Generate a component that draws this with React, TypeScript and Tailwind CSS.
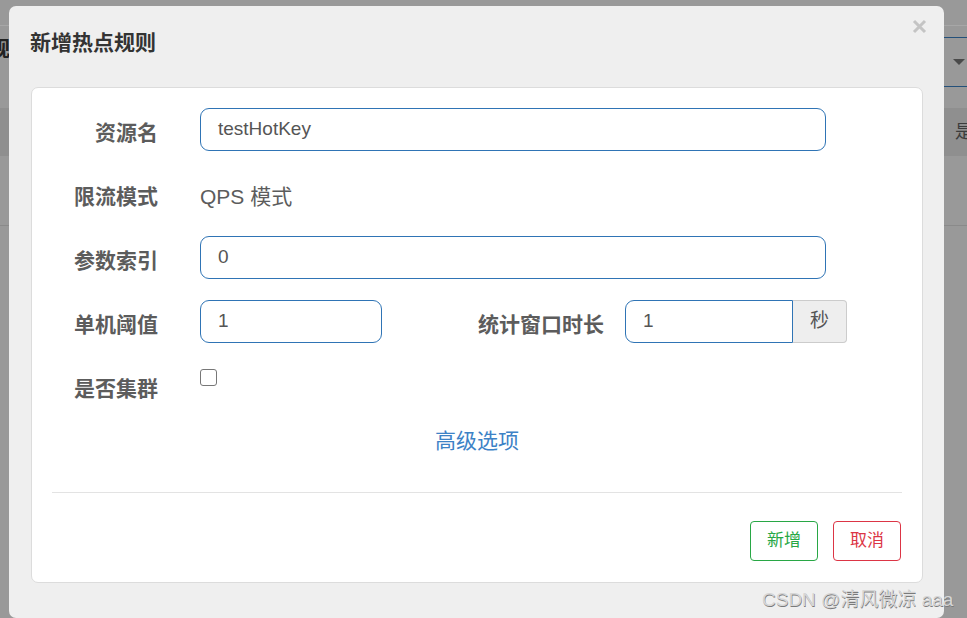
import React from "react";

function FieldLabel({ children, className = "" }: { children: React.ReactNode; className?: string }) {
  return (
    <div className={`shrink-0 pt-[12px] text-right text-[21px] font-bold leading-[26px] text-[#5c5c5c] ${className}`}>
      {children}
    </div>
  );
}

function TextInput({ value, className = "" }: { value: string; className?: string }) {
  return (
    <div
      className={`flex h-[43px] items-center rounded-[9px] border border-[#2f74b5] bg-white pl-[17px] text-[19px] text-[#555] ${className}`}
    >
      {value}
    </div>
  );
}

export default function App() {
  return (
    <div className="relative h-[618px] w-[967px] overflow-hidden bg-[#999] font-['Liberation_Sans','Noto_Sans_CJK_SC',sans-serif]">
      {/* page behind the backdrop */}
      <div className="flex flex-col">
        <div className="h-[26px] border-b border-[#a7a7a7]" />
        <div className="flex h-[82px] justify-between">
          <div className="-ml-[11px] mt-[10px] text-[21px] font-bold leading-[26px] text-[#222]">规</div>
          <div className="mt-[11px] flex h-[50px] w-[23px] items-center justify-center border-y border-[#24507a]">
            <svg width="12" height="6" viewBox="0 0 12 6" className="ml-[6px]">
              <path d="M0 0h12L6 6z" fill="#4a4a4a" />
            </svg>
          </div>
        </div>
        <div className="flex h-[48px] items-center justify-end bg-[#8f8f8f]">
          <span className="-mr-[6px] text-[18px] text-[#3c3c3c]">是</span>
        </div>
        <div className="h-[70px] border-b border-[#8a8a8a]" />
      </div>

      {/* modal */}
      <div className="absolute left-[9px] top-[6px] h-[612px] w-[935px] rounded-[7px] bg-[#efefef]">
        <div className="flex h-[81px] items-start justify-between pl-[21px] pr-[17px]">
          <div className="pt-[24px] text-[21px] font-bold leading-[26px] text-[#333]">新增热点规则</div>
          <svg width="15" height="15" viewBox="0 0 15 15" className="mt-[13px]">
            <path d="M2 2L13 13M13 2L2 13" stroke="#c4c4c4" strokeWidth="3" />
          </svg>
        </div>

        <div className="ml-[22px] h-[496px] w-[892px] rounded-[7px] border border-[#dcdcdc] bg-white p-[20px]">
          <div className="mb-[21px] flex h-[43px] gap-[42px]">
            <FieldLabel className="w-[106px]">资源名</FieldLabel>
            <TextInput value="testHotKey" className="w-[626px]" />
          </div>

          <div className="mb-[21px] flex h-[43px] gap-[42px]">
            <FieldLabel className="w-[106px]">限流模式</FieldLabel>
            <div className="pt-[12px] text-[21px] leading-[26px] text-[#5c5c5c]">QPS 模式</div>
          </div>

          <div className="mb-[21px] flex h-[43px] gap-[42px]">
            <FieldLabel className="w-[106px]">参数索引</FieldLabel>
            <TextInput value="0" className="w-[626px]" />
          </div>

          <div className="mb-[21px] flex h-[43px]">
            <FieldLabel className="w-[106px]">单机阈值</FieldLabel>
            <TextInput value="1" className="ml-[42px] w-[182px]" />
            <FieldLabel className="ml-[96px]">统计窗口时长</FieldLabel>
            <div className="ml-[21px] flex h-[43px]">
              <div className="flex h-full w-[168px] items-center rounded-l-[9px] border border-[#2f74b5] pl-[17px] text-[19px] text-[#555]">
                1
              </div>
              <div className="flex h-full w-[54px] items-center justify-center rounded-r-[4px] border border-l-0 border-[#ccc] bg-[#eee] text-[19px] text-[#555]">
                秒
              </div>
            </div>
          </div>

          <div className="flex h-[43px] gap-[42px]">
            <FieldLabel className="w-[106px]">是否集群</FieldLabel>
            <div className="mt-[5px] h-[17px] w-[17px] rounded-[3px] border border-[#777] bg-white" />
          </div>

          <div className="mt-[21px] text-center text-[21px] leading-[26px] text-[#3d82c6]">高级选项</div>

          <div className="mt-[38px] border-t border-[#e3e3e3]" />

          <div className="mt-[28px] flex justify-end gap-[15px] pr-[1px]">
            <button className="h-[40px] w-[68px] rounded-[4px] border border-[#28a745] bg-white text-[17px] text-[#28a745]">
              新增
            </button>
            <button className="h-[40px] w-[68px] rounded-[4px] border border-[#dc3545] bg-white text-[17px] text-[#dc3545]">
              取消
            </button>
          </div>
        </div>
      </div>

      {/* watermark */}
      <div className="absolute left-[762px] top-[588px] text-[19px] leading-[24px] text-[#d6d6d6] [text-shadow:0.5px_0.5px_0_#7a7a7a]">
        CSDN @清风微凉 aaa
      </div>
    </div>
  );
}
